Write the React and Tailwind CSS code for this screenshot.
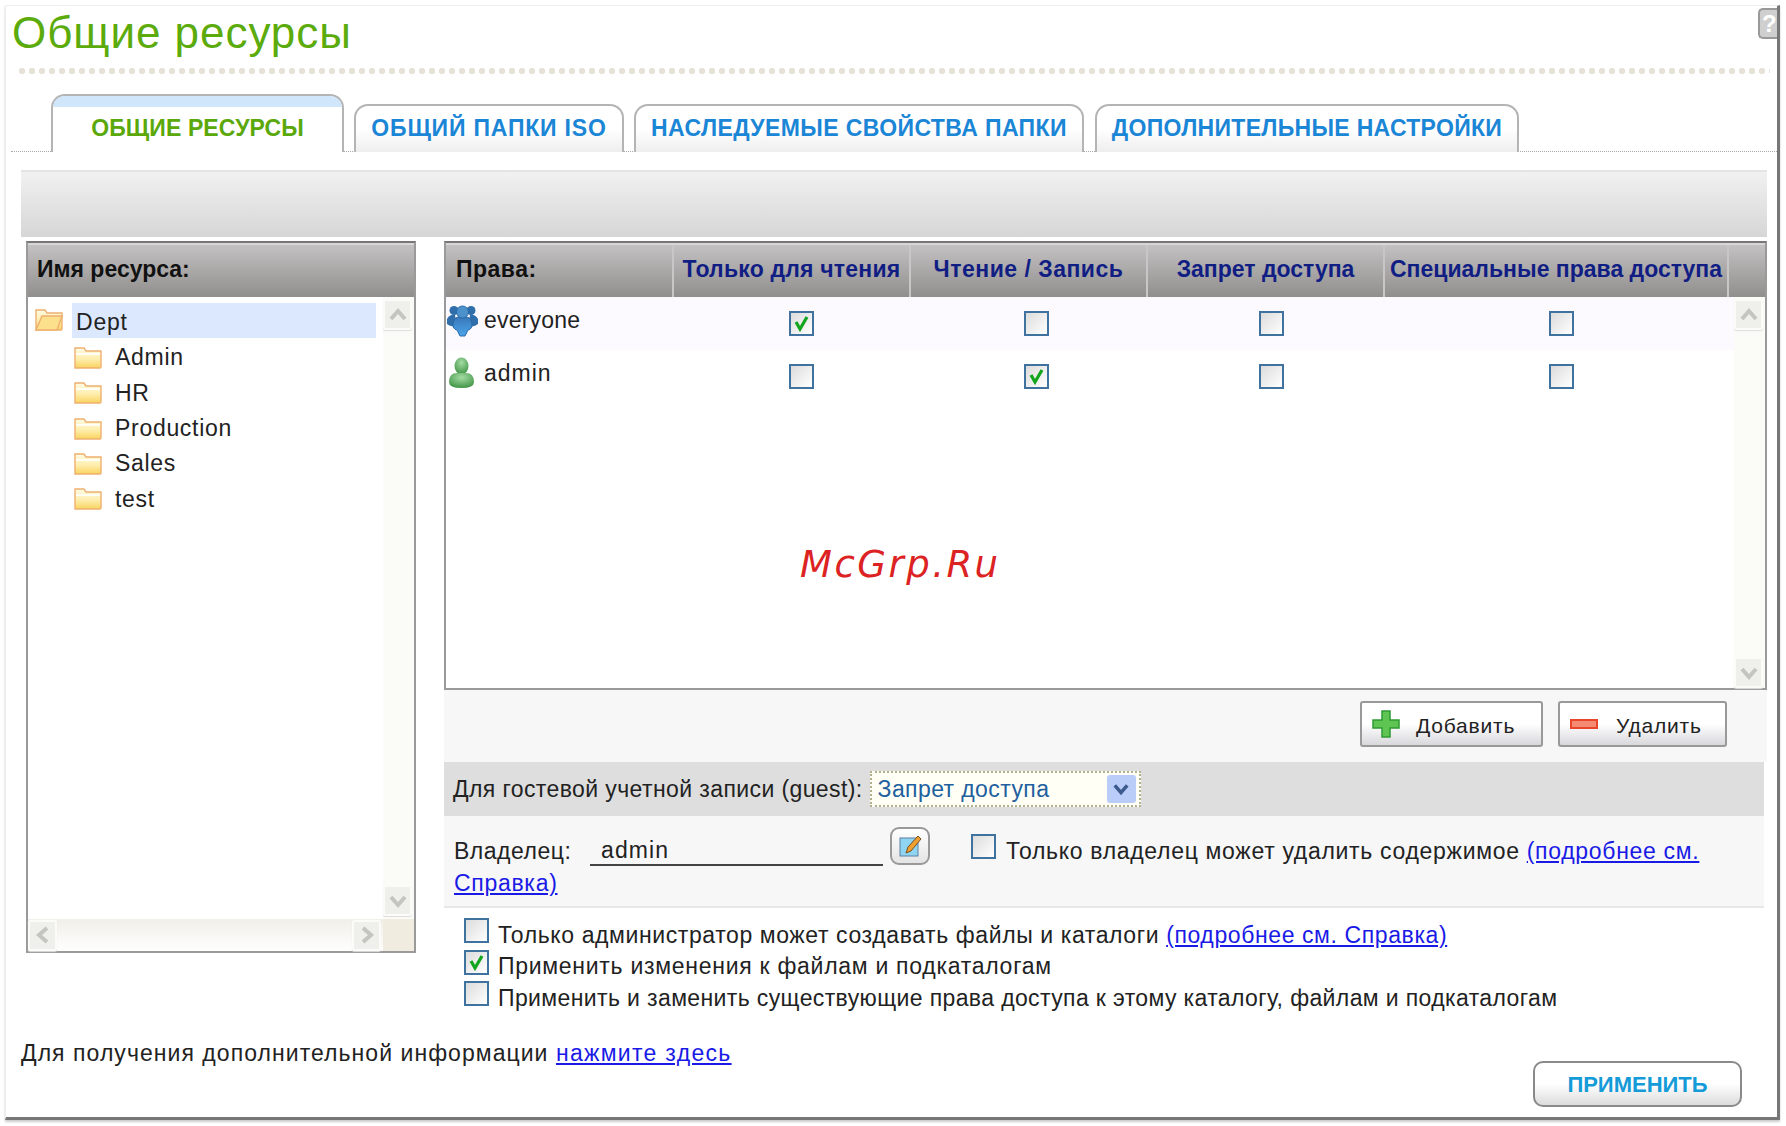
import React from 'react';

const tabs = [
  { label: 'ОБЩИЕ РЕСУРСЫ', width: 'w-[293px]', track: 'tracking-[0.1px]', active: true },
  { label: 'ОБЩИЙ ПАПКИ ISO', width: 'w-[270px] ml-[10px]', track: 'tracking-[0.8px]' },
  { label: 'НАСЛЕДУЕМЫЕ СВОЙСТВА ПАПКИ', width: 'w-[450px] ml-[10px]', track: 'tracking-[0.4px]' },
  { label: 'ДОПОЛНИТЕЛЬНЫЕ НАСТРОЙКИ', width: 'w-[424px] ml-[11px]', track: 'tracking-[0.3px]' },
];

const folders = ['Admin', 'HR', 'Production', 'Sales', 'test'];

function Chevron({ dir = 'up', color = '#c4c4c0', size = 18 }) {
  const rot = { up: 0, right: 90, down: 180, left: 270 }[dir];
  return (
    <svg width={size} height={size} viewBox="0 0 18 18" style={{ transform: `rotate(${rot}deg)` }}>
      <path d="M2 13 L9 5 L16 13" fill="none" stroke={color} strokeWidth="4" />
    </svg>
  );
}

function ScrollButton({ dir }) {
  return (
    <div className="w-[29px] h-[31px] flex items-center justify-center bg-[#efefeb] border-2 border-[#fbfbf8] rounded-[2px] shadow-[0_1px_1px_#ddd]">
      <Chevron dir={dir} />
    </div>
  );
}

function Checkbox({ checked }) {
  return (
    <div className="w-[25px] h-[25px] shrink-0 border-2 border-[#3f729f] bg-gradient-to-br from-[#dcdcdc] to-white flex items-center justify-center">
      {checked && (
        <svg width="17" height="17" viewBox="0 0 17 17">
          <path d="M3 7 L7 14 L14 2" fill="none" stroke="#12a51e" strokeWidth="3.2" />
        </svg>
      )}
    </div>
  );
}

function Folder({ open }) {
  return (
    <svg width="28" height="23" viewBox="0 0 28 23" className="shrink-0">
      <defs>
        <linearGradient id="fold" x1="0" y1="0" x2="0" y2="1">
          <stop offset="0" stopColor="#fffbe4" />
          <stop offset="0.55" stopColor="#feeeae" />
          <stop offset="1" stopColor="#fad35e" />
        </linearGradient>
      </defs>
      <path d="M1 2 h9 l2 3 h15 v16 q0 1 -1 1 h-25 z" fill="url(#fold)" stroke="#eeb070" strokeWidth="1.4" />
      {open ? (
        <path d="M7 8 h20 l-5 14 h-21 z" fill="#fde08c" stroke="#eeb070" strokeWidth="1.4" />
      ) : (
        <path d="M2 8 h24" stroke="#fffef4" strokeWidth="2" />
      )}
    </svg>
  );
}

function GroupIcon() {
  return (
    <svg width="33" height="33" viewBox="0 0 33 33" className="shrink-0">
      <defs>
        <linearGradient id="blue" x1="0" y1="0" x2="0" y2="1">
          <stop offset="0" stopColor="#3a78b8" />
          <stop offset="1" stopColor="#4aa4ec" />
        </linearGradient>
      </defs>
      {/* side figures */}
      <circle cx="8" cy="6.5" r="4.5" fill="#2f6eaa" />
      <circle cx="25" cy="6.5" r="4.5" fill="#2f6eaa" />
      <path d="M1 15 q3 -5 8 -4 l2 10 q-5 3 -10 -1 z" fill="#2f6eaa" />
      <path d="M32 15 q-3 -5 -8 -4 l-2 10 q5 3 10 -1 z" fill="#2f6eaa" />
      {/* center figure */}
      <path d="M7 23 q0 -9 5 -10 h9 q5 1 5 10 q-2 3 -4 3 l-3 6 h-5 l-3 -6 q-2 0 -4 -3 z" fill="url(#blue)" stroke="#2a6aa8" strokeWidth="1" />
      <circle cx="16.5" cy="8" r="6" fill="#4c90cc" stroke="#2a6aa8" strokeWidth="1" />
    </svg>
  );
}

function UserIcon() {
  return (
    <svg width="27" height="32" viewBox="0 0 27 32" className="shrink-0">
      <defs>
        <radialGradient id="green" cx="0.5" cy="0.3" r="0.75">
          <stop offset="0" stopColor="#a4dca4" />
          <stop offset="1" stopColor="#3a9040" />
        </radialGradient>
      </defs>
      <ellipse cx="13.5" cy="9" rx="7" ry="8.5" fill="url(#green)" />
      <path d="M1 25 q0 -9 8 -9 h9 q8 0 8 9 q0 6 -12.5 6 q-12.5 0 -12.5 -6 z" fill="url(#green)" />
    </svg>
  );
}

function PanelHeader({ children }) {
  return (
    <div className="h-[54px] bg-gradient-to-b from-[#c4c1c2] to-[#918e8e] border-t-2 border-[#d8d6d6] flex items-center">
      {children}
    </div>
  );
}

export default function App() {
  return (
    <div className="relative w-[1786px] h-[1126px] bg-white pl-[5px] pt-[5px] font-['Liberation_Sans',sans-serif] text-[23px] text-[#222]">
      <div className="w-[1775px] h-[1115px] border-l border-t border-[#eeeeee] border-r-[3px] border-r-[#777] border-b-[3px] border-b-[#777] shadow-[0_2px_2px_#ccc]">
        {/* Title */}
        <div className="h-[62px] flex justify-between items-start">
          <h1 className="pl-[6px] text-[44px] leading-[54px] tracking-[0.95px] text-[#5cab0c]">Общие ресурсы</h1>
          <div className="mt-[2px] w-[19px] h-[31px] bg-[#cfcfcf] border-2 border-r-0 border-[#999] rounded-l-[5px] text-white font-bold text-[24px] leading-[27px] pl-[2px]">?</div>
        </div>
        <div className="h-[6px] ml-[11px] mr-[7px] bg-[radial-gradient(circle,#e6e2d8_3px,transparent_3px)] bg-[length:10px_6px]"></div>

        {/* Tabs */}
        <div className="mt-[20px] ml-[5px] h-[58px] pl-[40px] flex items-end border-b border-dotted border-[#aaa]">
          {tabs.map((tab) => (
            <div
              key={tab.label}
              className={`${tab.width} ${tab.track} -mb-px shrink-0 border-2 border-b-0 border-[#b4b4b4] rounded-t-[14px] overflow-hidden font-bold text-[23px] flex flex-col ${
                tab.active
                  ? 'h-[58px] bg-white text-[#5aa80a]'
                  : 'h-[48px] bg-gradient-to-b from-white via-white to-[#eeeeee] text-[#1b86d6]'
              }`}
            >
              {tab.active && <div className="h-[11px] shrink-0 bg-[#cfe6fb]"></div>}
              <div className={`flex-1 flex items-center justify-center whitespace-nowrap ${tab.active ? 'pb-[3px]' : 'pb-[2px]'}`}>{tab.label}</div>
            </div>
          ))}
        </div>

        {/* Grey toolbar */}
        <div className="mt-[18px] ml-[15px] mr-[10px] h-[67px] bg-gradient-to-b from-[#f2f1f2] to-[#d6d6d6] border-t-2 border-[#e4e4e4]"></div>

        <div className="mt-[4px] pl-[20px] h-[771px] flex items-start">
          {/* Resource tree */}
          <div className="w-[390px] h-[712px] flex flex-col border-2 border-[#9a9a9a] border-t-[#777]">
            <PanelHeader>
              <span className="pl-[9px] pb-[4px] font-bold text-[#111]">Имя ресурса:</span>
            </PanelHeader>
            <div className="flex-1 grid grid-cols-[1fr_31px] grid-rows-[1fr_32px]">
              <div className="pt-[6px]">
                <div className="h-[37px] flex items-start">
                  <div className="ml-[7px] mt-[5px]"><Folder open /></div>
                  <div className="ml-[9px] w-[304px] h-[35px] bg-[#dbe8fd] pl-[4px] leading-[38px] tracking-[0.8px]">Dept</div>
                </div>
                {folders.map((name) => (
                  <div key={name} className="h-[35.3px] flex items-center pl-[46px]">
                    <Folder />
                    <span className="ml-[13px] tracking-[0.7px]">{name}</span>
                  </div>
                ))}
              </div>
              <div className="bg-[#fbfbf7] flex flex-col justify-between pb-[3px] pt-[2px]">
                <ScrollButton dir="up" />
                <ScrollButton dir="down" />
              </div>
              <div className="bg-gradient-to-b from-[#f1efe9] to-white flex justify-between items-center pr-[2px]">
                <ScrollButton dir="left" />
                <ScrollButton dir="right" />
              </div>
              <div className="bg-[#f0ede0]"></div>
            </div>
          </div>

          <div className="ml-[28px] w-[1323px]">
            {/* Permissions table */}
            <div className="h-[449px] flex flex-col border-2 border-[#9a9a9a] border-t-[#777]">
              <PanelHeader>
                <div className="h-full w-full grid grid-cols-[228px_237px_237px_237px_344px_1fr] font-bold text-[23px] text-[#101e84] text-center">
                  <div className="border-r-2 border-[#c8c6c6] flex items-center pl-[10px] pb-[4px] tracking-[0.5px] text-[#111]">Права:</div>
                  <div className="border-r-2 border-[#c8c6c6] flex items-center justify-center pb-[4px] tracking-[0.2px] whitespace-nowrap">Только для чтения</div>
                  <div className="border-r-2 border-[#c8c6c6] flex items-center justify-center pb-[4px] tracking-[0.5px] whitespace-nowrap">Чтение / Запись</div>
                  <div className="border-r-2 border-[#c8c6c6] flex items-center justify-center pb-[4px] whitespace-nowrap">Запрет доступа</div>
                  <div className="border-r-2 border-[#c8c6c6] flex items-center justify-center pb-[4px] whitespace-nowrap">Специальные права доступа</div>
                  <div></div>
                </div>
              </PanelHeader>
              <div className="flex-1 flex">
                <div className="flex-1">
                  <div className="h-[53px] bg-[#fdfaff] grid grid-cols-[237px_236px_234px_236px_344px] items-center">
                    <div className="flex items-center pb-[7px]">
                      <GroupIcon />
                      <span className="ml-[5px] tracking-[0.2px]">everyone</span>
                    </div>
                    <div className="flex justify-center"><Checkbox checked /></div>
                    <div className="flex justify-center"><Checkbox /></div>
                    <div className="flex justify-center"><Checkbox /></div>
                    <div className="flex justify-center"><Checkbox /></div>
                  </div>
                  <div className="h-[53px] grid grid-cols-[237px_236px_234px_236px_344px] items-center">
                    <div className="flex items-center pb-[7px] pl-[2px]">
                      <UserIcon />
                      <span className="ml-[9px] tracking-[1px]">admin</span>
                    </div>
                    <div className="flex justify-center"><Checkbox /></div>
                    <div className="flex justify-center"><Checkbox checked /></div>
                    <div className="flex justify-center"><Checkbox /></div>
                    <div className="flex justify-center"><Checkbox /></div>
                  </div>
                </div>
                <div className="w-[31px] bg-[#fbfbf7] flex flex-col justify-between pt-[2px]">
                  <ScrollButton dir="up" />
                  <ScrollButton dir="down" />
                </div>
              </div>
            </div>

            {/* Add / remove */}
            <div className="h-[72px] bg-[#f7f7f7] pt-[11px] pr-[40px] flex justify-end gap-[15px]">
              <button className="w-[183px] h-[46px] flex items-center border-2 border-[#999] rounded-[3px] bg-gradient-to-b from-white via-white to-[#d8d8dc] pl-[10px]">
                <svg width="28" height="28" viewBox="0 0 28 28" className="shrink-0">
                  <path d="M10 1 h8 v9 h9 v8 h-9 v9 h-8 v-9 h-9 v-8 h9 z" fill="#5ec552" stroke="#2f9a34" strokeWidth="1.5" />
                </svg>
                <span className="ml-[16px] pt-[4px] text-[21px] tracking-[0.8px]">Добавить</span>
              </button>
              <button className="w-[169px] h-[46px] flex items-center border-2 border-[#999] rounded-[3px] bg-gradient-to-b from-white via-white to-[#d8d8dc] pl-[10px]">
                <svg width="28" height="10" viewBox="0 0 28 10" className="shrink-0">
                  <rect x="1" y="1" width="26" height="8" fill="#f58a72" stroke="#e8452a" strokeWidth="2" />
                </svg>
                <span className="ml-[18px] pt-[4px] text-[21px] tracking-[0.8px]">Удалить</span>
              </button>
            </div>

            {/* Guest access */}
            <div className="h-[54px] mr-[3px] bg-[#dedede] pl-[9px] flex items-center">
              <span className="tracking-[0.4px] whitespace-nowrap">Для гостевой учетной записи (guest):</span>
              <div className="ml-[7px] w-[271px] h-[36px] border-2 border-dotted border-[#b0b08c] bg-[#fffff6] flex items-center justify-between pl-[6px] pr-[3px] text-[#22609e] tracking-[0.4px]">
                <span>Запрет доступа</span>
                <div className="w-[29px] h-[28px] rounded-[3px] bg-[#b9cdf8] flex items-center justify-center">
                  <Chevron dir="down" color="#3c5a8c" size={16} />
                </div>
              </div>
            </div>

            {/* Owner */}
            <div className="h-[92px] mr-[3px] bg-[#f7f7f7] border-b-2 border-[#e8e8e8] pl-[10px]">
              <div className="h-[50px] flex items-start">
                <span className="mt-[18px] w-[136px] tracking-[0.5px]">Владелец:</span>
                <div className="mt-[17px] w-[293px] h-[33px] border-b-2 border-[#444] pl-[11px] leading-[35px] tracking-[1.1px]">admin</div>
                <div className="mt-[11px] ml-[7px] w-[40px] h-[38px] border-2 border-[#999] rounded-[9px] bg-gradient-to-b from-white to-[#e4e4e4] flex items-center justify-center">
                  <svg width="24" height="24" viewBox="0 0 24 24">
                    <rect x="2" y="4" width="18" height="18" fill="#8fd4f0" stroke="#5a7fa0" />
                    <path d="M8 19 L10 13 L20 2 L23 5 L13 17 Z" fill="#f0a030" stroke="#7a5020" />
                  </svg>
                </div>
                <div className="mt-[18px] ml-[41px]"><Checkbox /></div>
                <span className="mt-[18px] ml-[10px] tracking-[0.69px] whitespace-nowrap">
                  Только владелец может удалить содержимое <a className="text-[#1a1ae6] underline">(подробнее см.</a>
                </span>
              </div>
              <a className="text-[#1a1ae6] underline tracking-[0.7px]">Справка)</a>
            </div>

            {/* Options */}
            <div className="pt-[10px] pl-[20px]">
              <div className="h-[31.5px] flex gap-[9px]">
                <Checkbox />
                <span className="leading-[34px] tracking-[0.6px] whitespace-nowrap">
                  Только администратор может создавать файлы и каталоги <a className="text-[#1a1ae6] underline">(подробнее см. Справка)</a>
                </span>
              </div>
              <div className="h-[31.5px] flex gap-[9px]">
                <Checkbox checked />
                <span className="leading-[33px] tracking-[0.72px] whitespace-nowrap">Применить изменения к файлам и подкаталогам</span>
              </div>
              <div className="h-[31.5px] flex gap-[9px]">
                <Checkbox />
                <span className="leading-[34px] tracking-[0.38px] whitespace-nowrap">Применить и заменить существующие права доступа к этому каталогу, файлам и подкаталогам</span>
              </div>
            </div>
          </div>
        </div>

        {/* Footer */}
        <div className="flex justify-between items-start pl-[15px] pr-[35px]">
          <p className="mt-[26px] leading-[30px] tracking-[1.05px]">
            Для получения дополнительной информации <a className="text-[#1a1ae6] underline tracking-[1.3px]">нажмите здесь</a>
          </p>
          <button className="mt-[49px] w-[209px] h-[46px] rounded-[10px] border-2 border-[#8a8a8a] bg-gradient-to-b from-white via-white to-[#dcdcdc] text-[#149bd8] font-bold text-[22px]">
            ПРИМЕНИТЬ
          </button>
        </div>
      </div>

      {/* Watermark */}
      <div className="absolute left-[800px] top-[537px] font-['DejaVu_Sans',sans-serif] italic text-[37px] tracking-[2.5px] text-[#dc2222]">McGrp.Ru</div>
    </div>
  );
}
